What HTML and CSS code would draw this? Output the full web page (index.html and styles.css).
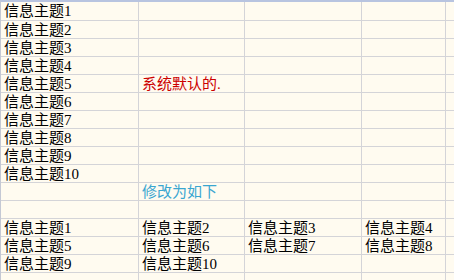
FILE: index.html
```html
<!DOCTYPE html>
<html lang="zh">
<head>
<meta charset="utf-8">
<title>信息主题</title>
<link rel="stylesheet" href="styles.css">
</head>
<body>
<div class="sheet">
  <div class="c">信息主题1</div><div class="c"></div><div class="c"></div><div class="c"></div><div class="c"></div>
  <div class="c">信息主题2</div><div class="c"></div><div class="c"></div><div class="c"></div><div class="c"></div>
  <div class="c">信息主题3</div><div class="c"></div><div class="c"></div><div class="c"></div><div class="c"></div>
  <div class="c">信息主题4</div><div class="c"></div><div class="c"></div><div class="c"></div><div class="c"></div>
  <div class="c">信息主题5</div><div class="c red">系统默认的.</div><div class="c"></div><div class="c"></div><div class="c"></div>
  <div class="c">信息主题6</div><div class="c"></div><div class="c"></div><div class="c"></div><div class="c"></div>
  <div class="c">信息主题7</div><div class="c"></div><div class="c"></div><div class="c"></div><div class="c"></div>
  <div class="c">信息主题8</div><div class="c"></div><div class="c"></div><div class="c"></div><div class="c"></div>
  <div class="c">信息主题9</div><div class="c"></div><div class="c"></div><div class="c"></div><div class="c"></div>
  <div class="c">信息主题10</div><div class="c"></div><div class="c"></div><div class="c"></div><div class="c"></div>
  <div class="c"></div><div class="c blue">修改为如下</div><div class="c"></div><div class="c"></div><div class="c"></div>
  <div class="c"></div><div class="c"></div><div class="c"></div><div class="c"></div><div class="c"></div>
  <div class="c">信息主题1</div><div class="c">信息主题2</div><div class="c">信息主题3</div><div class="c">信息主题4</div><div class="c"></div>
  <div class="c">信息主题5</div><div class="c">信息主题6</div><div class="c">信息主题7</div><div class="c">信息主题8</div><div class="c"></div>
  <div class="c">信息主题9</div><div class="c">信息主题10</div><div class="c"></div><div class="c"></div><div class="c"></div>
  <div class="c"></div><div class="c"></div><div class="c"></div><div class="c"></div><div class="c"></div>
</div>
</body>
</html>
```
FILE: styles.css
```css
html, body {
  margin: 0;
  padding: 0;
  background: #fffbf0;
  overflow: hidden;
}
.sheet {
  width: 454px;
  height: 280px;
  overflow: hidden;
  box-sizing: border-box;
  border-top: 2px solid #b8c4e0;
  border-left: 1px solid #c4c8d4;
  display: grid;
  grid-template-columns: 137px 105px 116px 83px 20px;
  grid-template-rows: 18px repeat(15, 17px);
  grid-auto-rows: 17px;
  row-gap: 1px;
  column-gap: 1px;
  background: #d4d4d8;
  font-family: "Liberation Serif", "Noto Sans CJK SC", serif;
  font-size: 15px;
  color: #000;
}
.c {
  background: #fffbf0;
  padding-left: 3px;
  line-height: 19px;
  white-space: nowrap;
  overflow: visible;
}
.red {
  color: #cc0000;
}
.blue {
  color: #3aa6d0;
}
```
